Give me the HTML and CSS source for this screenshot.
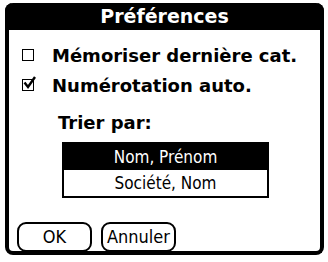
FILE: index.html
```html
<!DOCTYPE html>
<html lang="fr">
<head>
<meta charset="utf-8">
<link rel="stylesheet" href="styles.css">
</head>
<body>
<div class="dialog">
  <div class="title">Préférences</div>
  <div class="content">
    <div class="check-row">
      <span class="box"></span>
      <span class="label">Mémoriser dernière cat.</span>
    </div>
    <div class="check-row">
      <span class="box">
        <svg viewBox="0 0 14 14" width="14" height="14"><path d="M2.5 6.5 L6 11 L13 1" fill="none" stroke="#000" stroke-width="2.4"/></svg>
      </span>
      <span class="label">Numérotation auto.</span>
    </div>
    <div class="sort-label">Trier par:</div>
    <div class="list">
      <div class="item selected">Nom, Prénom</div>
      <div class="item">Société, Nom</div>
    </div>
    <div class="buttons">
      <div class="btn">OK</div>
      <div class="btn">Annuler</div>
    </div>
  </div>
</div>
</body>
</html>
```
FILE: styles.css
```css
html, body {
  margin: 0;
  padding: 0;
  background: #fff;
}
body {
  width: 328px;
  height: 262px;
  overflow: hidden;
  font-family: "DejaVu Sans", sans-serif;
  color: #000;
}
*, *::before, *::after {
  box-sizing: border-box;
}
.dialog {
  margin: 3px 0 0 5px;
  width: 319px;
  height: 252px;
  border: 4px solid #000;
  border-top: 0;
  border-radius: 8px;
  display: flex;
  flex-direction: column;
}
.title {
  height: 27px;
  margin: 0 -4px;
  background: #000;
  color: #fff;
  border-radius: 8px 8px 0 0;
  font-weight: bold;
  font-size: 19px;
  line-height: 27px;
  text-align: center;
}
.content {
  flex: 1;
  display: flex;
  flex-direction: column;
}
.check-row {
  display: flex;
  align-items: center;
  height: 30px;
  gap: 18px;
}
.check-row:first-child {
  margin-top: 10px;
}
.box {
  width: 12px;
  height: 12px;
  border: 1.5px solid #000;
  flex: none;
  position: relative;
  margin-left: 13px;
}
.box svg {
  position: absolute;
  left: -1.5px;
  top: -4px;
}
.label {
  font-weight: bold;
  font-size: 18px;
}
.sort-label {
  margin: 12px 0 0 49px;
  font-weight: bold;
  font-size: 18px;
  height: 22px;
  line-height: 22px;
}
.list {
  margin: 8px 0 0 53px;
  width: 207px;
  border: 2px solid #000;
}
.item {
  height: 26px;
  line-height: 26px;
  text-align: center;
  font-family: "DejaVu Sans Condensed", "DejaVu Sans", sans-serif;
  font-stretch: condensed;
  font-size: 17px;
}
.item.selected {
  background: #000;
  color: #fff;
}
.buttons {
  margin: 24px 0 0 8px;
  display: flex;
  gap: 9px;
}
.btn {
  width: 75px;
  height: 30px;
  border: 2px solid #000;
  border-radius: 9px;
  text-align: center;
  line-height: 26px;
  font-family: "DejaVu Sans Condensed", "DejaVu Sans", sans-serif;
  font-stretch: condensed;
  font-size: 18px;
}
```
